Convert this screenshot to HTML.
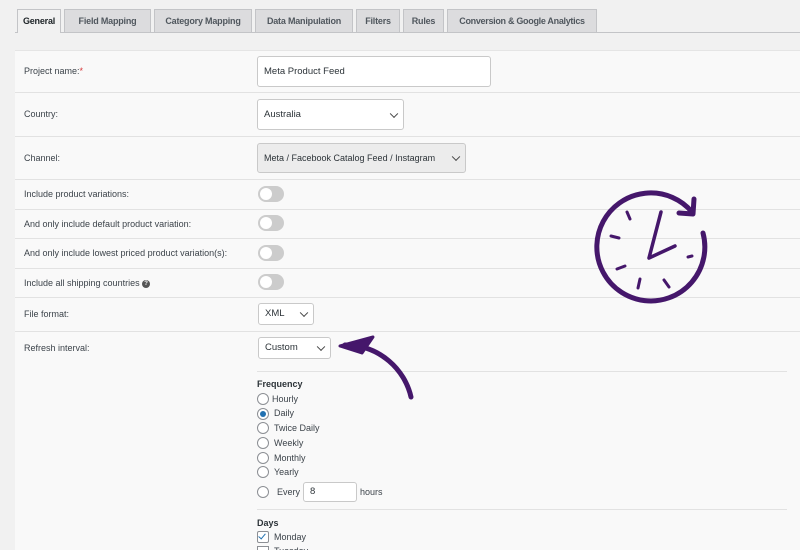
<!DOCTYPE html>
<html><head><style>
html,body{margin:0;width:800px;height:550px;overflow:hidden}
body{background:#f1f1f1;font-family:"Liberation Sans",Arial,sans-serif;font-size:9px;color:#3c434a;position:relative}
.a{position:absolute}
.tab{position:absolute;top:9px;height:23px;background:#dcdcde;border:1px solid #c3c4c7;border-bottom:none;font-size:9px;font-weight:bold;color:#50575e;line-height:23px;text-align:center;box-sizing:border-box;white-space:nowrap;overflow:hidden;letter-spacing:-0.2px}
.panel{position:absolute;left:15px;top:50px;width:785px;height:500px;background:#f9f9f9;border-top:1px solid #e5e5e5}
.row{position:absolute;left:15px;width:785px;border-bottom:1px solid #e2e2e2}
.lbl{position:absolute;left:24px;font-size:9px;color:#3c434a}
.inp{position:absolute;background:#fff;border:1px solid #c9c9c9;border-radius:3px;box-sizing:border-box;font-size:9.5px;color:#2c3338;padding-left:6px}
.chev{position:absolute;right:6px;top:50%;width:5px;height:5px;border-right:1.3px solid #444;border-bottom:1.3px solid #444;transform:translateY(-70%) rotate(45deg)}
.tog{position:absolute;left:258px;width:26px;height:16px;border-radius:8px;background:#ccc}
.tog:after{content:"";position:absolute;left:2px;top:2px;width:12px;height:12px;border-radius:50%;background:#fff}
.rad{position:absolute;left:257px;width:10px;height:10px;border:1px solid #8c8f94;border-radius:50%;background:#fff}
.rt{position:absolute;font-size:9px;color:#3c434a}
</style></head><body>
<div class="a" style="left:15px;top:32px;width:785px;height:1px;background:#c3c4c7"></div>
<div class="tab" style="left:17px;width:44px;background:#f1f1f1;color:#1d2327;height:24px">General</div>
<div class="tab" style="left:64px;width:87px">Field Mapping</div>
<div class="tab" style="left:154px;width:98px">Category Mapping</div>
<div class="tab" style="left:255px;width:98px">Data Manipulation</div>
<div class="tab" style="left:356px;width:44px">Filters</div>
<div class="tab" style="left:403px;width:41px">Rules</div>
<div class="tab" style="left:447px;width:150px;letter-spacing:-0.3px">Conversion &amp; Google Analytics</div>
<div class="panel"></div>
<div class="row" style="top:50px;height:42px"></div>
<div class="row" style="top:92px;height:44px"></div>
<div class="row" style="top:136px;height:43px"></div>
<div class="row" style="top:179px;height:30px"></div>
<div class="row" style="top:209px;height:29px"></div>
<div class="row" style="top:238px;height:30px"></div>
<div class="row" style="top:268px;height:29px"></div>
<div class="row" style="top:297px;height:34px"></div>
<div class="lbl" style="top:66px">Project name:<span style="color:#d63638">*</span></div>
<div class="inp" style="left:257px;top:56px;width:234px;height:31px;line-height:29px">Meta Product Feed</div>
<div class="lbl" style="top:109px">Country:</div>
<div class="inp" style="left:257px;top:99px;width:147px;height:31px;line-height:29px">Australia<div class="chev"></div></div>
<div class="lbl" style="top:153px">Channel:</div>
<div class="inp" style="left:257px;top:143px;width:209px;height:30px;line-height:28px;background:#ececec;font-size:9px">Meta / Facebook Catalog Feed / Instagram<div class="chev"></div></div>
<div class="lbl" style="top:189px">Include product variations:</div><div class="tog" style="top:186px"></div>
<div class="lbl" style="top:219px">And only include default product variation:</div><div class="tog" style="top:215px"></div>
<div class="lbl" style="top:248px">And only include lowest priced product variation(s):</div><div class="tog" style="top:245px"></div>
<div class="lbl" style="top:278px">Include all shipping countries <span style="display:inline-block;width:8px;height:8px;border-radius:50%;background:#555;color:#fff;font-size:6px;text-align:center;line-height:8px;font-weight:bold;vertical-align:middle">?</span></div><div class="tog" style="top:274px"></div>
<div class="lbl" style="top:309px">File format:</div>
<div class="inp" style="left:258px;top:303px;width:56px;height:22px;line-height:20px">XML<div class="chev"></div></div>
<div class="lbl" style="top:343px">Refresh interval:</div>
<div class="inp" style="left:258px;top:337px;width:73px;height:22px;line-height:20px">Custom<div class="chev"></div></div>
<div class="a" style="left:257px;top:371px;width:530px;height:1px;background:#e2e2e2"></div>
<div class="rt" style="left:257px;top:379px;font-weight:bold;color:#2c3338">Frequency</div>
<div class="rad" style="top:393px"></div><div class="rt" style="left:272px;top:394px">Hourly</div>
<div class="rad" style="top:408px"></div><div class="a" style="left:260px;top:411px;width:6px;height:6px;border-radius:50%;background:#2271b1"></div><div class="rt" style="left:274px;top:408px">Daily</div>
<div class="rad" style="top:422px"></div><div class="rt" style="left:274px;top:423px">Twice Daily</div>
<div class="rad" style="top:437px"></div><div class="rt" style="left:274px;top:438px">Weekly</div>
<div class="rad" style="top:452px"></div><div class="rt" style="left:274px;top:453px">Monthly</div>
<div class="rad" style="top:466px"></div><div class="rt" style="left:274px;top:467px">Yearly</div>
<div class="rad" style="top:486px"></div><div class="rt" style="left:277px;top:487px">Every</div>
<div class="inp" style="left:303px;top:482px;width:54px;height:20px;line-height:18px">8</div>
<div class="rt" style="left:360px;top:487px">hours</div>
<div class="a" style="left:257px;top:509px;width:530px;height:1px;background:#e2e2e2"></div>
<div class="rt" style="left:257px;top:518px;font-weight:bold;color:#2c3338">Days</div>
<div class="a" style="left:257px;top:531px;width:10px;height:10px;border:1px solid #8c8f94;background:#fff;border-radius:2px"></div>
<div class="a" style="left:260px;top:532px;width:3px;height:6px;border-right:1.5px solid #2271b1;border-bottom:1.5px solid #2271b1;transform:rotate(40deg)"></div>
<div class="rt" style="left:274px;top:532px">Monday</div>
<div class="a" style="left:257px;top:546px;width:10px;height:10px;border:1px solid #8c8f94;background:#fff"></div>
<div class="rt" style="left:274px;top:546px">Tuesday</div>
<svg class="a" style="left:0;top:0" width="800" height="550" fill="none" stroke="#45176b" stroke-linecap="round">
<path d="M703 233 A54 54 0 1 1 692 212" stroke-width="5"/>
<path d="M694 199 L693 214 L679 213" stroke-width="5" stroke-linejoin="round"/>
<path d="M649 258 L661 212 M649 258 L675 246" stroke-width="3.5"/>
<path d="M627 212 L630 219 M611 236 L619 238 M617 269 L625 266 M640 279 L638 288 M664 280 L669 287 M688 257 L692 256" stroke-width="3"/>
<path d="M411 397 C405 370 380 345 345 345" stroke-width="5"/>
<path d="M340 346 L373 337 L362 353 Z" fill="#45176b" stroke-width="3" stroke-linejoin="round"/>
</svg>
</body></html>
